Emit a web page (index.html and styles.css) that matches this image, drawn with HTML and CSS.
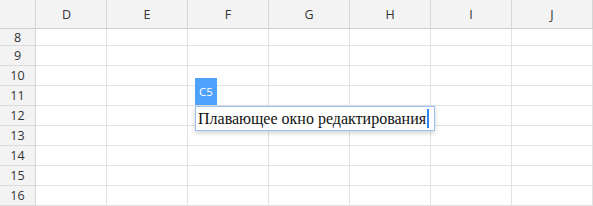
FILE: index.html
```html
<!DOCTYPE html>
<html>
<head>
<meta charset="utf-8">
<link rel="stylesheet" href="styles.css">
</head>
<body>
<div class="sheet">
  <div class="grid">
    <div class="corner"></div>
    <div class="colhead first">D</div>
    <div class="colhead">E</div>
    <div class="colhead">F</div>
    <div class="colhead">G</div>
    <div class="colhead">H</div>
    <div class="colhead">I</div>
    <div class="colhead">J</div>

    <div class="rowhead">8</div><div class="cell"></div><div class="cell"></div><div class="cell"></div><div class="cell"></div><div class="cell"></div><div class="cell"></div><div class="cell"></div>
    <div class="rowhead">9</div><div class="cell"></div><div class="cell"></div><div class="cell"></div><div class="cell"></div><div class="cell"></div><div class="cell"></div><div class="cell"></div>
    <div class="rowhead">10</div><div class="cell"></div><div class="cell"></div><div class="cell"></div><div class="cell"></div><div class="cell"></div><div class="cell"></div><div class="cell"></div>
    <div class="rowhead">11</div><div class="cell"></div><div class="cell"></div><div class="cell"></div><div class="cell"></div><div class="cell"></div><div class="cell"></div><div class="cell"></div>
    <div class="rowhead">12</div><div class="cell"></div><div class="cell"></div><div class="cell"></div><div class="cell"></div><div class="cell"></div><div class="cell"></div><div class="cell"></div>
    <div class="rowhead">13</div><div class="cell"></div><div class="cell"></div><div class="cell"></div><div class="cell"></div><div class="cell"></div><div class="cell"></div><div class="cell"></div>
    <div class="rowhead">14</div><div class="cell"></div><div class="cell"></div><div class="cell"></div><div class="cell"></div><div class="cell"></div><div class="cell"></div><div class="cell"></div>
    <div class="rowhead">15</div><div class="cell"></div><div class="cell"></div><div class="cell"></div><div class="cell"></div><div class="cell"></div><div class="cell"></div><div class="cell"></div>
    <div class="rowhead">16</div><div class="cell"></div><div class="cell"></div><div class="cell"></div><div class="cell"></div><div class="cell"></div><div class="cell"></div><div class="cell"></div>
  </div>

  <div class="editor">
    <div class="badge">C5</div>
    <div class="input"><span class="text">Плавающее окно редактирования</span><span class="caret"></span></div>
  </div>
</div>
</body>
</html>
```

FILE: styles.css
```css
html, body {
  margin: 0;
  padding: 0;
  background: #ffffff;
}

.sheet {
  position: relative;
  width: 593px;
  height: 206px;
  overflow: hidden;
  font-family: "Open Sans", "Noto Sans", sans-serif;
}

.grid {
  display: grid;
  grid-template-columns: 36px 71px repeat(6, 81px);
  grid-template-rows: 29px 17px repeat(8, 20px);
}

.corner,
.colhead {
  background: #f3f3f3;
  border-right: 1px solid #d6d6d6;
  border-bottom: 1px solid #cfcfcf;
  box-sizing: border-box;
}

.colhead {
  display: flex;
  align-items: center;
  justify-content: center;
  font-size: 12.5px;
  color: #333333;
  padding-top: 1px;
}

.colhead.first {
  padding-right: 9px;
}

.rowhead {
  background: #f3f3f3;
  border-right: 1px solid #d6d6d6;
  border-bottom: 1px solid #dcdcdc;
  box-sizing: border-box;
  display: flex;
  align-items: center;
  justify-content: center;
  font-size: 12.5px;
  color: #333333;
}

.cell {
  border-right: 1px solid #e2e2e2;
  border-bottom: 1px solid #e2e2e2;
  box-sizing: border-box;
}

.editor {
  position: absolute;
  left: 195px;
  top: 78px;
  display: flex;
  flex-direction: column;
  align-items: flex-start;
  gap: 1px;
}

.badge {
  width: 22px;
  height: 27px;
  background: #4ea2fb;
  color: #ffffff;
  font-size: 11.5px;
  display: flex;
  align-items: center;
  justify-content: center;
  box-sizing: border-box;
}

.input {
  width: 240px;
  height: 25px;
  box-sizing: border-box;
  background: #ffffff;
  border: 1px solid #9cc2ef;
  box-shadow: 0 2px 5px rgba(0, 0, 0, 0.18);
  display: flex;
  align-items: center;
  padding-left: 2px;
  font-family: "Liberation Serif", "Times New Roman", serif;
  font-size: 16px;
  color: #111111;
}

.caret {
  width: 2px;
  height: 19px;
  background: #2f86e8;
  margin-left: 1px;
}
```
